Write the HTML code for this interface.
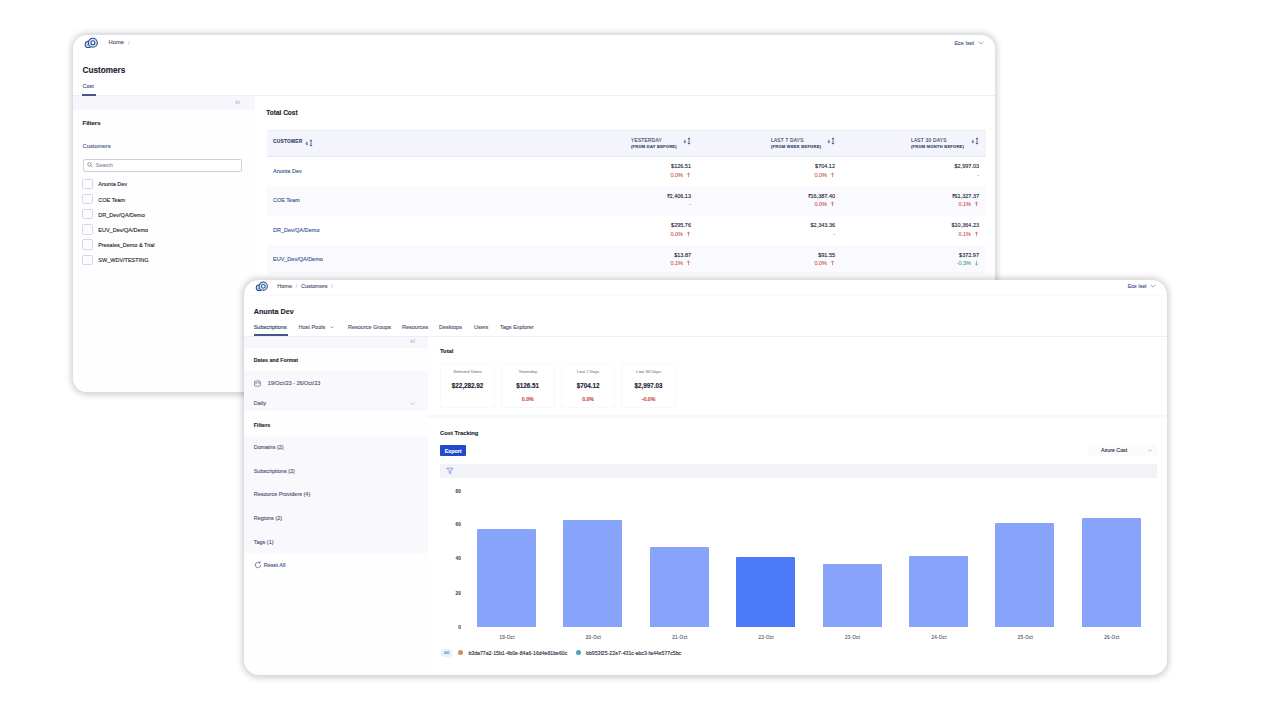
<!DOCTYPE html>
<html lang="en">
<head>
<meta charset="utf-8">
<title>Cost dashboards</title>
<style>
*{box-sizing:border-box;margin:0;padding:0}
html,body{width:1280px;height:720px;background:#fff;overflow:hidden}
body{font-family:"Liberation Sans",sans-serif;color:#23262f;position:relative}
.card{position:absolute;background:#fff;overflow:hidden}
#c1{left:73px;top:35px;width:922px;height:357px;border-radius:14px;box-shadow:0 .5px 6px 2px rgba(0,0,0,.19)}
#c2{left:244px;top:280px;width:923px;height:395px;border-radius:15px;box-shadow:0 .5px 6px 2px rgba(0,0,0,.19)}
.wrap{position:absolute;left:0;top:0;width:1280px;height:720px}
.t{position:absolute;white-space:nowrap;line-height:10px;margin-top:-5px;font-size:5.5px;-webkit-text-stroke:.12px currentColor}
.b{font-weight:bold}
.r{text-align:right}
.box{position:absolute}
.nav{color:#4d536b}
.blue{color:#35568f}
.red{color:#cf5a56}
.green{color:#3fb08c}
.mut{color:#5b6685}
.ar{vertical-align:-1px;margin-left:1.5px}
.sb{top:364px;width:54.5px;height:43.5px;border:1px solid #f8f8fb;border-radius:2px;background:#fff}
.sl{width:54.5px;text-align:center;font-size:4.2px;color:#8d92a3}
.sv{width:54.5px;text-align:center;font-size:6.3px;color:#1d2130}
.sp{width:54.5px;text-align:center;font-size:5.2px;color:#cf5350}
.ax{font-size:4.8px;color:#4d5263;font-weight:bold}
.bar{width:59px;background:#87a3fa;border-radius:1px 1px 0 0;margin-left:-.4px}
.xl{top:638px;width:59.3px;text-align:center;font-size:4.5px;letter-spacing:.3px;color:#50566a}
.cb{left:82px;width:10.5px;height:10.5px;margin-top:-.5px;border:1px solid #d3d8e4;border-radius:1.5px;background:#fbfcfe}
.th{font-size:4.8px;letter-spacing:.25px;color:#3a4468}
.th2{font-size:4.05px;letter-spacing:.24px;color:#3a4468;font-weight:bold}
</style>
</head>
<body>
<svg width="0" height="0" style="position:absolute"><defs><g id="srt"><path d="M1.8 2.6 V5.6 M.6 4.5 L1.8 5.7 L3 4.5" fill="none" stroke="#3f4c78" stroke-width=".8"/><path d="M6 .9 V7.1 M4.8 2.1 L6 .9 L7.2 2.1 M4.8 5.9 L6 7.1 L7.2 5.9" fill="none" stroke="#3f4c78" stroke-width=".8"/></g><g id="up"><path d="M2.5 .9 V5.1 M.9 2.5 L2.5 .9 L4.1 2.5" fill="none" stroke="currentColor" stroke-width=".7"/></g><g id="dn"><path d="M2.5 .9 V5.1 M.9 3.5 L2.5 5.1 L4.1 3.5" fill="none" stroke="currentColor" stroke-width=".7"/></g><g id="dbl"><path d="M3 .8 L.8 3 L3 5.2 M6 .8 L3.8 3 L6 5.2" fill="none" stroke="#7b84a3" stroke-width=".8"/></g></defs></svg>
<!-- ================= CARD 1 ================= -->
<div class="card" id="c1"><div class="wrap" style="left:-73px;top:-35px" id="w1">
<!--C1S-->
<!-- header -->
<svg class="box" style="left:84px;top:36.5px" width="15" height="12" viewBox="0 0 15 12"><circle cx="4.3" cy="7.4" r="3.1" fill="#d3e2fb" stroke="#2d4a82" stroke-width="1.1"/><circle cx="8.8" cy="5.7" r="4.5" fill="#d3e2fb" stroke="#2d4a82" stroke-width="1.1"/><circle cx="8.9" cy="5.8" r="2" fill="#f4f8ff" stroke="#34579c" stroke-width="1.1"/><circle cx="3.9" cy="7.9" r=".55" fill="#2d4a82"/></svg>
<div class="t nav" style="left:108.5px;top:42px;font-size:5.8px">Home</div>
<div class="t" style="left:128px;top:42.5px;color:#b9bdcb">/</div>
<div class="t" style="right:306px;top:42.5px;color:#3f4f86">Ece Isel</div>
<svg class="box" style="left:978px;top:40.5px" width="6" height="4" viewBox="0 0 6 4"><path d="M.6 .7 L3 3.1 L5.4 .7" fill="none" stroke="#8b93ad" stroke-width=".8"/></svg>
<div class="t b" style="left:82.5px;top:71px;font-size:8.2px;color:#1d2130">Customers</div>
<div class="t" style="left:82.5px;top:86px;color:#3f4f86">Cost</div>
<div class="box" style="left:73px;top:95px;width:922px;height:1px;background:#eeeff4"></div>
<div class="box" style="left:82px;top:94.4px;width:14px;height:1.4px;background:#45568a"></div>
<!-- sidebar -->
<div class="box" style="left:73px;top:96px;width:182px;height:300px;background:#fefeff"></div>
<div class="box" style="left:73px;top:96px;width:182px;height:13.5px;background:#f6f6fc"></div>

<svg class="box" style="left:234.5px;top:99.5px" width="5.6" height="4.8" viewBox="0 0 7 6"><use href="#dbl"/></svg>
<div class="t b" style="left:82.5px;top:123px;font-size:6px">Filters</div>
<div class="t" style="left:82.5px;top:146px;font-size:5.8px;color:#4b5b86">Customers</div>
<div class="box" style="left:82.5px;top:158.5px;width:159px;height:13px;border:1px solid #cdd0da;border-radius:2px;background:#fff"></div>
<svg class="box" style="left:87px;top:162px" width="6" height="6" viewBox="0 0 6 6"><circle cx="2.4" cy="2.4" r="1.7" fill="none" stroke="#6d748c" stroke-width=".7"/><path d="M3.7 3.7 L5.3 5.3" stroke="#6d748c" stroke-width=".7"/></svg>
<div class="t" style="left:95.5px;top:165px;color:#8a90a4">Search</div>
<div class="box cb" style="top:179px"></div><div class="t" style="left:98.3px;top:184.3px">Anunta Dev</div>
<div class="box cb" style="top:194.2px"></div><div class="t" style="left:98.3px;top:199.5px">COE Team</div>
<div class="box cb" style="top:209.4px"></div><div class="t" style="left:98.3px;top:214.7px">DR_Dev/QA/Demo</div>
<div class="box cb" style="top:224.6px"></div><div class="t" style="left:98.3px;top:229.9px">EUV_Dev/QA/Demo</div>
<div class="box cb" style="top:239.8px"></div><div class="t" style="left:98.3px;top:245.1px">Presales_Demo &amp; Trial</div>
<div class="box cb" style="top:255px"></div><div class="t" style="left:98.3px;top:260.3px">SW_WDV/TESTING</div>
<!-- main -->
<div class="t b" style="left:266.3px;top:112.9px;font-size:6.5px;color:#1d2130">Total Cost</div>
<div class="box" style="left:266.5px;top:130px;width:719px;height:26.5px;background:#f3f4fc;border-top:1px solid #eaecf5;border-bottom:1px solid #e4e6f1"></div>
<div class="box" style="left:266.5px;top:186px;width:719px;height:29.5px;background:#f9f9fe"></div>
<div class="box" style="left:266.5px;top:245px;width:719px;height:29.5px;background:#f9f9fe"></div>
<div class="t b th" style="left:273px;top:142px">CUSTOMER</div>
<svg class="box sort" style="left:304.5px;top:138.5px" width="9" height="8" viewBox="0 0 9 8"><use href="#srt"/></svg>
<div class="t th" style="left:631px;top:140.5px">YESTERDAY</div><div class="t th2" style="left:631px;top:147.4px">(FROM DAY BEFORE)</div>
<svg class="box sort" style="left:683px;top:136.5px" width="9" height="8" viewBox="0 0 9 8"><use href="#srt"/></svg>
<div class="t th" style="left:771px;top:140.5px">LAST 7 DAYS</div><div class="t th2" style="left:771px;top:147.4px">(FROM WEEK BEFORE)</div>
<svg class="box sort" style="left:827px;top:136.5px" width="9" height="8" viewBox="0 0 9 8"><use href="#srt"/></svg>
<div class="t th" style="left:911px;top:140.5px">LAST 30 DAYS</div><div class="t th2" style="left:911px;top:147.4px">(FROM MONTH BEFORE)</div>
<svg class="box sort" style="left:971px;top:136.5px" width="9" height="8" viewBox="0 0 9 8"><use href="#srt"/></svg>
<!-- rows -->
<div class="t blue" style="left:273px;top:171px">Anunta Dev</div>
<div class="t blue" style="left:273px;top:200px">COE Team</div>
<div class="t blue" style="left:273px;top:229.5px">DR_Dev/QA/Demo</div>
<div class="t blue" style="left:273px;top:259px">EUV_Dev/QA/Demo</div>
<!-- col 1 -->
<div class="t" style="right:589px;top:166px">$126.51</div><div class="t red" style="right:589px;top:174.5px">0.0% <svg class="ar" width="5" height="6" viewBox="0 0 5 6"><use href="#up"/></svg></div>
<div class="t" style="right:589px;top:195.5px">₹2,406.13</div><div class="t mut" style="right:589px;top:204px">-</div>
<div class="t" style="right:589px;top:224.5px">$295.76</div><div class="t red" style="right:589px;top:233.5px">0.0% <svg class="ar" width="5" height="6" viewBox="0 0 5 6"><use href="#up"/></svg></div>
<div class="t" style="right:589px;top:254.5px">$13.87</div><div class="t red" style="right:589px;top:263px">0.1% <svg class="ar" width="5" height="6" viewBox="0 0 5 6"><use href="#up"/></svg></div>
<!-- col 2 -->
<div class="t" style="right:445px;top:166px">$704.12</div><div class="t red" style="right:445px;top:174.5px">0.0% <svg class="ar" width="5" height="6" viewBox="0 0 5 6"><use href="#up"/></svg></div>
<div class="t" style="right:445px;top:195.5px">₹16,387.40</div><div class="t red" style="right:445px;top:204px">0.0% <svg class="ar" width="5" height="6" viewBox="0 0 5 6"><use href="#up"/></svg></div>
<div class="t" style="right:445px;top:224.5px">$2,343.36</div><div class="t mut" style="right:445px;top:233.5px">-</div>
<div class="t" style="right:445px;top:254.5px">$91.55</div><div class="t red" style="right:445px;top:263px">0.0% <svg class="ar" width="5" height="6" viewBox="0 0 5 6"><use href="#up"/></svg></div>
<!-- col 3 -->
<div class="t" style="right:301px;top:166px">$2,997.03</div><div class="t mut" style="right:301px;top:174.5px">-</div>
<div class="t" style="right:301px;top:195.5px">₹61,327.37</div><div class="t red" style="right:301px;top:204px">0.1% <svg class="ar" width="5" height="6" viewBox="0 0 5 6"><use href="#up"/></svg></div>
<div class="t" style="right:301px;top:224.5px">$10,364.23</div><div class="t red" style="right:301px;top:233.5px">0.1% <svg class="ar" width="5" height="6" viewBox="0 0 5 6"><use href="#up"/></svg></div>
<div class="t" style="right:301px;top:254.5px">$372.97</div><div class="t green" style="right:301px;top:263px">-0.3% <svg class="ar" width="5" height="6" viewBox="0 0 5 6"><use href="#dn"/></svg></div>
<!--C1E-->
</div></div>
<!-- ================= CARD 2 ================= -->
<div class="card" id="c2"><div class="wrap" style="left:-244px;top:-280px" id="w2">
<!--C2S-->
<!-- header -->
<svg class="box" style="left:255px;top:281px" width="14" height="11" viewBox="0 0 15 12"><circle cx="4.3" cy="7.4" r="3.1" fill="#d3e2fb" stroke="#2d4a82" stroke-width="1.1"/><circle cx="8.8" cy="5.7" r="4.5" fill="#d3e2fb" stroke="#2d4a82" stroke-width="1.1"/><circle cx="8.9" cy="5.8" r="2" fill="#f4f8ff" stroke="#34579c" stroke-width="1.1"/><circle cx="3.9" cy="7.9" r=".55" fill="#2d4a82"/></svg>
<div class="t nav" style="left:277.3px;top:286.2px">Home</div>
<div class="t" style="left:295.7px;top:286.2px;color:#b9bdcb">/</div>
<div class="t nav" style="left:301px;top:286.2px">Customers</div>
<div class="t" style="left:331.3px;top:286.2px;color:#b9bdcb">/</div>
<div class="t" style="right:133.5px;top:286.4px;font-size:5.3px;color:#3f4f86">Ece Isel</div>
<svg class="box" style="left:1150px;top:284.1px" width="6" height="4" viewBox="0 0 6 4"><path d="M.6 .7 L3 3.1 L5.4 .7" fill="none" stroke="#8b93ad" stroke-width=".8"/></svg>
<div class="box" style="left:244px;top:294.5px;width:923px;height:1px;background:#fafafc"></div>
<div class="t b" style="left:253.7px;top:312.4px;font-size:7.2px;color:#1d2130">Anunta Dev</div>
<div class="t" style="left:253.7px;top:326.8px;color:#2b3c6e">Subscriptions</div>
<div class="t nav" style="left:298.6px;top:326.8px">Host Pools</div>
<svg class="box" style="left:330.3px;top:325.6px" width="4" height="2.7" viewBox="0 0 6 4"><path d="M.6 .7 L3 3.1 L5.4 .7" fill="none" stroke="#6d7590" stroke-width=".9"/></svg>
<div class="t nav" style="left:348px;top:326.8px">Resource Groups</div>
<div class="t nav" style="left:402px;top:326.8px">Resources</div>
<div class="t nav" style="left:439px;top:326.8px">Desktops</div>
<div class="t nav" style="left:474px;top:326.8px">Users</div>
<div class="t nav" style="left:500px;top:326.8px">Tags Explorer</div>
<div class="box" style="left:244px;top:335.5px;width:923px;height:1px;background:#eeeff4"></div>
<div class="box" style="left:253.5px;top:334.3px;width:34.5px;height:1.4px;background:#45568a"></div>
<!-- sidebar -->
<div class="box" style="left:244px;top:336.5px;width:184px;height:340px;background:#fefeff"></div>
<div class="box" style="left:244px;top:336.5px;width:184px;height:11.5px;background:#f6f6fc"></div>
<svg class="box" style="left:410px;top:338.7px" width="5.6" height="4.8" viewBox="0 0 7 6"><use href="#dbl"/></svg>
<div class="t b" style="left:253.7px;top:360px;font-size:5.25px">Dates and Format</div>
<div class="box" style="left:244px;top:371px;width:184px;height:22.5px;background:#f8f8fd"></div>
<div class="box" style="left:244px;top:393.5px;width:184px;height:17.5px;background:#f8f8fd"></div>
<svg class="box" style="left:254px;top:379.5px" width="7" height="7" viewBox="0 0 7 7"><rect x=".6" y="1" width="5.8" height="5.2" rx="1" fill="none" stroke="#5b6685" stroke-width=".7"/><path d="M.6 2.9 H6.4" stroke="#5b6685" stroke-width=".7"/></svg>
<div class="t nav" style="left:267.7px;top:382.8px">19/Oct/23 - 26/Oct/23</div>
<div class="t nav" style="left:253.7px;top:403px">Daily</div>
<svg class="box" style="left:410.3px;top:401.6px" width="5" height="3.3" viewBox="0 0 6 4"><path d="M.6 .7 L3 3.1 L5.4 .7" fill="none" stroke="#9aa1b8" stroke-width=".8"/></svg>
<div class="t b" style="left:253.7px;top:425.4px;font-size:5.6px">Filters</div>
<div class="box" style="left:244px;top:436px;width:184px;height:23.5px;background:#f8f8fd"></div>
<div class="box" style="left:244px;top:459.5px;width:184px;height:23.5px;background:#f8f8fd"></div>
<div class="box" style="left:244px;top:483px;width:184px;height:23.5px;background:#f8f8fd"></div>
<div class="box" style="left:244px;top:506.5px;width:184px;height:23.5px;background:#f8f8fd"></div>
<div class="box" style="left:244px;top:530px;width:184px;height:22.5px;background:#f8f8fd"></div>
<div class="t nav" style="left:253.7px;top:447.3px">Domains (2)</div>
<div class="t nav" style="left:253.7px;top:470.8px">Subscriptions (2)</div>
<div class="t nav" style="left:253.7px;top:494.4px">Resource Providers (4)</div>
<div class="t nav" style="left:253.7px;top:517.9px">Regions (2)</div>
<div class="t nav" style="left:253.7px;top:541.5px">Tags (1)</div>
<svg class="box" style="left:253.7px;top:561.3px" width="8" height="8" viewBox="0 0 8 8"><path d="M6.6 4 A2.7 2.7 0 1 1 5.6 1.9" fill="none" stroke="#4b5b86" stroke-width=".75"/><path d="M4.6 1.9 H6.2 V.4" fill="none" stroke="#4b5b86" stroke-width=".75"/></svg>
<div class="t" style="left:263.7px;top:565px;color:#3f4f86">Reset All</div>
<!-- main: total -->
<div class="t b" style="left:440px;top:351.3px;font-size:5.8px">Total</div>
<div class="box sb" style="left:440.2px"></div><div class="box sb" style="left:500.5px"></div><div class="box sb" style="left:560.8px"></div><div class="box sb" style="left:621.3px"></div>
<div class="t sl" style="left:440.2px;top:372px">Selected Dates</div><div class="t sv b" style="left:440.2px;top:386px">$22,282.92</div>
<div class="t sl" style="left:500.5px;top:372px">Yesterday</div><div class="t sv b" style="left:500.5px;top:386px">$126.51</div><div class="t sp b" style="left:500.5px;top:399.2px">0.0%</div>
<div class="t sl" style="left:560.8px;top:372px">Last 7 Days</div><div class="t sv b" style="left:560.8px;top:386px">$704.12</div><div class="t sp b" style="left:560.8px;top:399.2px">0.0%</div>
<div class="t sl" style="left:621.3px;top:372px">Last 30 Days</div><div class="t sv b" style="left:621.3px;top:386px">$2,997.03</div><div class="t sp b" style="left:621.3px;top:399.2px">-0.0%</div>
<div class="box" style="left:428px;top:414.5px;width:739px;height:3px;background:#f7f8fb"></div>
<!-- cost tracking -->
<div class="t b" style="left:440px;top:433px;font-size:5.8px">Cost Tracking</div>
<div class="box" style="left:440.4px;top:444.7px;width:25.6px;height:11.3px;background:#2049cc;border-radius:1px"></div>
<div class="t b" style="left:440.4px;top:451.2px;width:25.6px;text-align:center;color:#fff;font-size:5.3px">Export</div>
<div class="box" style="left:1088px;top:445.3px;width:68.5px;height:11px;background:#fbfbfe;border-radius:1px"></div><div class="t" style="left:1101px;top:449.8px;font-size:5.3px;color:#2a2f40">Azure Cost</div>
<svg class="box" style="left:1147.7px;top:448.5px" width="4.5" height="3" viewBox="0 0 6 4"><path d="M.6 .7 L3 3.1 L5.4 .7" fill="none" stroke="#9aa1b8" stroke-width=".9"/></svg>
<div class="box" style="left:440.4px;top:463.5px;width:716.3px;height:14.5px;background:#f2f3f9"></div>
<svg class="box" style="left:445.5px;top:466.5px" width="8" height="8" viewBox="0 0 8 8"><path d="M1 1.2 H7 L4.7 4 V6.6 L3.3 5.8 V4 Z" fill="none" stroke="#6480d6" stroke-width=".7" stroke-linejoin="round"/></svg>
<!-- chart -->
<div class="t ax" style="right:819.2px;top:491.5px">80</div>
<div class="t ax" style="right:819.2px;top:524.7px">60</div>
<div class="t ax" style="right:819.2px;top:559px">40</div>
<div class="t ax" style="right:819.2px;top:594.2px">20</div>
<div class="t ax" style="right:819.2px;top:627.8px">0</div>
<div class="box bar" style="left:477.4px;top:529.4px;height:97.6px"></div>
<div class="box bar" style="left:563.8px;top:520.4px;height:106.6px"></div>
<div class="box bar" style="left:650.2px;top:547px;height:80px"></div>
<div class="box bar" style="left:736.6px;top:557px;height:70px;background:#4b7bf8"></div>
<div class="box bar" style="left:823px;top:564px;height:63px"></div>
<div class="box bar" style="left:909.4px;top:556.2px;height:70.8px"></div>
<div class="box bar" style="left:995.8px;top:522.9px;height:104.1px"></div>
<div class="box bar" style="left:1082.2px;top:518.4px;height:108.6px"></div>
<div class="t xl" style="left:477.4px">19-Oct</div><div class="t xl" style="left:563.8px">20-Oct</div><div class="t xl" style="left:650.2px">21-Oct</div><div class="t xl" style="left:736.6px">22-Oct</div><div class="t xl" style="left:823px">23-Oct</div><div class="t xl" style="left:909.4px">24-Oct</div><div class="t xl" style="left:995.8px">25-Oct</div><div class="t xl" style="left:1082.2px">26-Oct</div>
<!-- legend -->
<div class="box" style="left:441.4px;top:648.7px;width:10.2px;height:8px;background:#e9effc;border-radius:3px"></div>
<div class="t b" style="left:441.4px;top:652.8px;width:10.2px;text-align:center;font-size:4px;color:#6f8fe0">All</div>
<div class="box" style="left:458.3px;top:650.2px;width:5.2px;height:5.2px;border-radius:50%;background:#cf8f66"></div>
<div class="t" style="left:468.4px;top:652.8px;font-size:5.2px;color:#2a2f40">b3da77a2-15b1-4b0e-84a6-16d4e81be60c</div>
<div class="box" style="left:575.9px;top:650.2px;width:5.2px;height:5.2px;border-radius:50%;background:#45a7bb"></div>
<div class="t" style="left:586px;top:652.8px;font-size:5.2px;color:#2a2f40">bb953f25-22e7-431c-abc3-fa44e577c5bc</div>
<!--C2E-->
</div></div>
</body>
</html>
